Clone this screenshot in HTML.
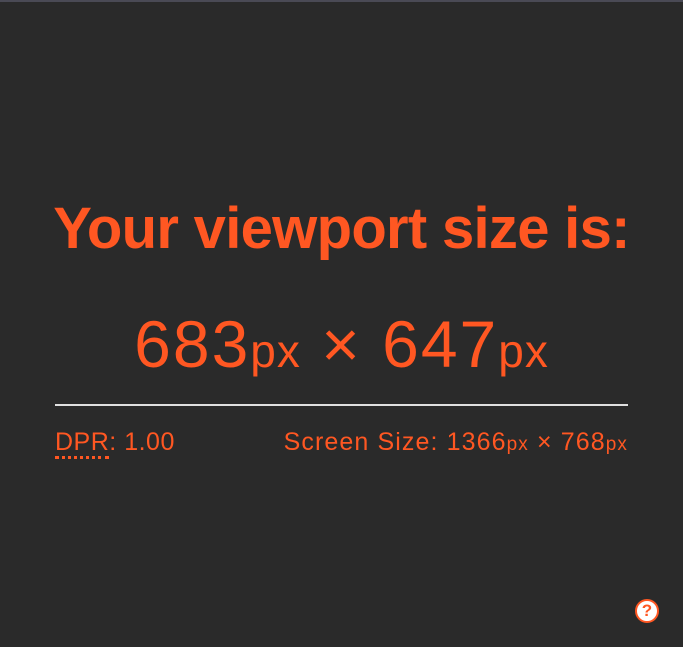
<!DOCTYPE html>
<html><head><style>
html,body{margin:0;padding:0}
body{width:683px;height:647px;background:#2a2a2a;border-top:2px solid #4a4a55;box-sizing:border-box;position:relative;overflow:hidden;font-family:"Liberation Sans",sans-serif;color:#ff5722}
.h{position:absolute;left:0;width:683px;text-align:center;top:194px;font-weight:bold;font-size:58px;line-height:66px;letter-spacing:-0.7px;white-space:nowrap}
.s{position:absolute;left:0;width:683px;text-align:center;top:304px;font-size:66px;line-height:76px;letter-spacing:2px;white-space:nowrap}
.s small{font-size:46px;letter-spacing:1px}
.line{position:absolute;left:55px;width:573px;top:402px;height:2px;background:#e0e0e0}
.l{position:absolute;left:55px;top:425px;font-size:25px;line-height:30px;letter-spacing:0.5px}
.l u{text-decoration:none;border-bottom:3px dotted #ff5722}
.r{position:absolute;right:55px;top:425px;font-size:25px;line-height:30px;letter-spacing:1.1px;white-space:nowrap}
.r small{font-size:19px}
.q{position:absolute;left:635px;top:597px;width:24px;height:24px;border-radius:50%;background:#fff;border:2.5px solid #ff5722;box-sizing:border-box;color:#ff5722;font-weight:bold;font-size:17px;line-height:19px;text-align:center}
</style></head><body>
<div class="h">Your viewport size is:</div>
<div class="s">683<small>px</small> × 647<small>px</small></div>
<div class="line"></div>
<div class="l"><u>DPR</u>: 1.00</div>
<div class="r">Screen Size: 1366<small>px</small> × 768<small>px</small></div>
<div class="q">?</div>
</body></html>
